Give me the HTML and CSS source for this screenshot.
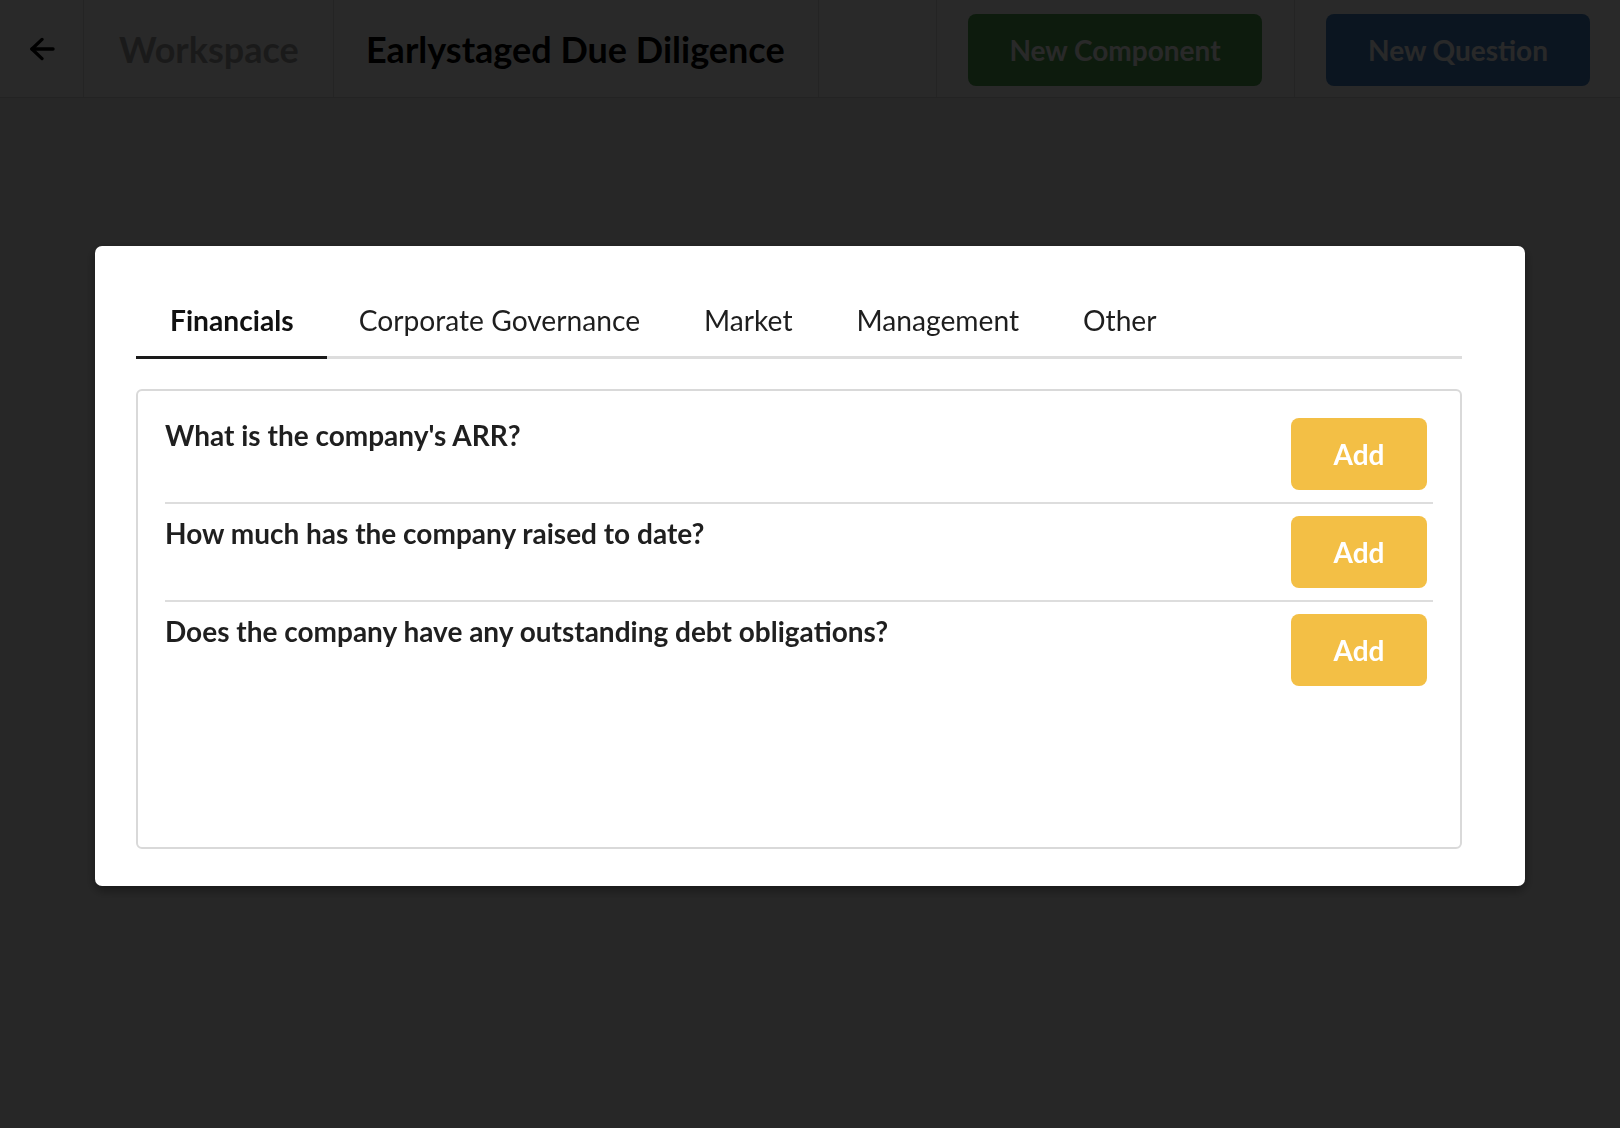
FILE: index.html
```html
<!DOCTYPE html>
<html lang="en">
<head>
<meta charset="utf-8">
<title>Earlystaged Due Diligence</title>
<link rel="stylesheet" href="styles.css">
</head>
<body>
<div class="app">
  <header class="topbar">
    <div class="cell back">
      <svg class="back-icon" width="26" height="26" viewBox="0 0 26 26" fill="none" stroke="#000" stroke-width="3.4" stroke-linecap="round" stroke-linejoin="round">
        <path d="M2 13 H24"/>
        <path d="M12.5 3 L2 13 L12.5 23"/>
      </svg>
    </div>
    <div class="cell crumb">Workspace</div>
    <div class="cell title">Earlystaged Due Diligence</div>
    <div class="cell spacer"></div>
    <div class="cell action"><button class="btn btn-green">New Component</button></div>
    <div class="cell action last"><button class="btn btn-blue">New Question</button></div>
  </header>
  <main class="content"></main>
</div>

<div class="overlay">
  <div class="modal">
    <nav class="tabs">
      <div class="tab active">Financials</div>
      <div class="tab">Corporate Governance</div>
      <div class="tab">Market</div>
      <div class="tab">Management</div>
      <div class="tab">Other</div>
    </nav>
    <section class="panel">
      <div class="row">
        <div class="question">What is the company's ARR?</div>
        <button class="add">Add</button>
      </div>
      <div class="row">
        <div class="question">How much has the company raised to date?</div>
        <button class="add">Add</button>
      </div>
      <div class="row">
        <div class="question">Does the company have any outstanding debt obligations?</div>
        <button class="add">Add</button>
      </div>
    </section>
  </div>
</div>
</body>
</html>
```

FILE: styles.css
```css
* {
  box-sizing: border-box;
}

html, body {
  margin: 0;
  padding: 0;
  height: 100%;
}

body {
  font-family: Lato, "Open Sans", "Liberation Sans", sans-serif;
  background: #eeeeee;
  overflow: hidden;
}

.app {
  height: 100vh;
  display: flex;
  flex-direction: column;
}

.topbar {
  display: flex;
  height: 98px;
  background: #ffffff;
  border-bottom: 1px solid #d6d6d6;
}

.cell {
  display: flex;
  align-items: center;
  padding: 0 32px;
  border-right: 1px solid #dcdcdc;
  white-space: nowrap;
}

.cell.last {
  border-right: none;
  padding: 0 30px 0 31px;
}

.back {
  padding: 0 28px 0 30px;
  width: 84px;
}

.back-icon {
  display: block;
}

.crumb {
  width: 250px;
  font-size: 36px;
  font-weight: 700;
  color: #a3a3a3;
  padding-left: 35px;
}

.title {
  width: 485px;
  font-size: 36px;
  font-weight: 700;
  color: #000000;
}

.spacer {
  flex: 1;
}

.action {
  padding: 0 32px 0 31px;
}

.btn {
  height: 72px;
  padding: 0 20px;
  border: none;
  border-radius: 8px;
  font-family: inherit;
  font-size: 28px;
  font-weight: 700;
  color: #ffffff;
  margin-top: 2px;
}

.btn-green {
  background: #53a553;
  width: 294px;
}

.btn-blue {
  background: #4783c6;
  width: 264px;
}

.content {
  flex: 1;
}

.overlay {
  position: fixed;
  inset: 0;
  padding-top: 4px;
  background: rgba(0, 0, 0, 0.84);
  display: flex;
  align-items: center;
  justify-content: center;
}

.modal {
  width: 1430px;
  background: #ffffff;
  border-radius: 7px;
  padding: 38px 63px 37px 41px;
  box-shadow: 0 4px 12px rgba(0, 0, 0, 0.4);
}

.tabs {
  display: flex;
  border-bottom: 3px solid #dddddd;
}

.tab {
  padding: 19px 32px 19px 32px;
  font-size: 28.2px;
  line-height: 34px;
  color: #1e1e1e;
  margin-bottom: -3px;
  border-bottom: 3px solid transparent;
}

.tab.active {
  font-weight: 700;
  color: #111111;
  border-bottom-color: #1a1a1a;
  padding-left: 34px;
  padding-right: 33px;
}

.panel {
  margin-top: 30px;
  height: 460px;
  border: 2px solid #d9d9d9;
  border-radius: 6px;
  padding: 15px 27px;
}

.row {
  display: flex;
  justify-content: space-between;
  align-items: flex-start;
  padding: 12px 0;
  border-bottom: 2px solid #dddddd;
}

.row:last-child {
  border-bottom: none;
}

.question {
  font-size: 28px;
  line-height: 34px;
  font-weight: 700;
  color: #1f1f1f;
}

.add {
  width: 136px;
  height: 72px;
  margin-right: 6px;
  border: none;
  border-radius: 8px;
  background: #f3bf45;
  color: #ffffff;
  font-family: inherit;
  font-size: 28px;
  font-weight: 700;
}
```
